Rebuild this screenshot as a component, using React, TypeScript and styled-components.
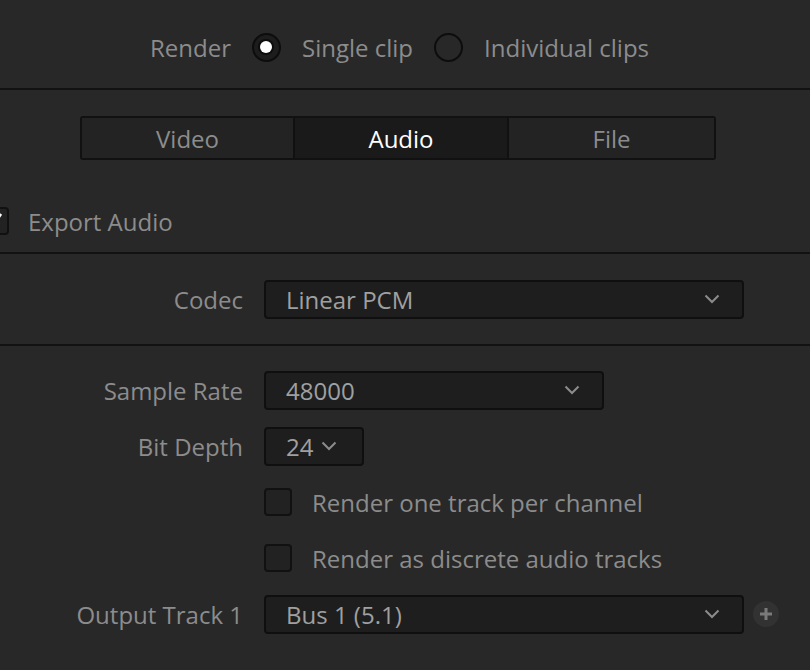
import * as React from 'react';
import styled, { createGlobalStyle } from 'styled-components';

const Global = createGlobalStyle`
  html, body {
    margin: 0;
    padding: 0;
    background: #282828;
  }
  body {
    font-family: 'Open Sans', 'Noto Sans', 'Liberation Sans', sans-serif;
    font-size: 24px;
    color: #8c8c8c;
    overflow: hidden;
  }
`;

const Panel = styled.div`
  width: 810px;
  height: 670px;
  background: #282828;
  overflow: hidden;
`;

const Section = styled.div`
  border-bottom: 2px solid #121212;
`;

const RenderRow = styled(Section)`
  display: flex;
  align-items: center;
  padding: 6px 0 0 150px;
  box-sizing: border-box;
  height: 90px;
  gap: 21px;
`;

const Label = styled.span`
  color: #8c8c8c;
  white-space: nowrap;
`;

const Radio = styled.span<{ $on?: boolean }>`
  width: 29px;
  height: 29px;
  flex: none;
  border-radius: 50%;
  box-sizing: border-box;
  border: 2px solid #0d0d0d;
  background: ${(p) => (p.$on ? '#1d1d1d' : 'transparent')};
  display: flex;
  align-items: center;
  justify-content: center;
  &::after {
    content: '';
    display: ${(p) => (p.$on ? 'block' : 'none')};
    width: 12px;
    height: 12px;
    border-radius: 50%;
    background: #fff;
    box-shadow: 0 0 0 2px #0d0d0d;
  }
`;

const TabsSection = styled(Section)`
  height: 164px;
  padding-top: 26px;
  box-sizing: border-box;
  display: flex;
  flex-direction: column;
`;

const Tabs = styled.div`
  margin-left: 80px;
  width: 636px;
  height: 44px;
  display: grid;
  grid-template-columns: 211px 214px 1fr;
  border: 2px solid #111;
  border-radius: 3px;
  box-sizing: border-box;
  overflow: hidden;
`;

const Tab = styled.div<{ $active?: boolean }>`
  display: flex;
  align-items: center;
  justify-content: center;
  background: ${(p) => (p.$active ? '#1a1a1a' : '#232323')};
  color: ${(p) => (p.$active ? '#ffffff' : '#8c8c8c')};
  & + & {
    border-left: 2px solid #111;
  }
`;

const ExportRow = styled.div`
  margin-top: 45px;
  height: 32px;
  display: flex;
  align-items: center;
  gap: 19px;
  margin-left: -19px;
`;

const Box = styled.span`
  width: 28px;
  height: 28px;
  flex: none;
  box-sizing: border-box;
  border: 2px solid #111;
  border-radius: 4px;
  background: #222;
  display: flex;
  align-items: center;
  justify-content: center;
`;

const CodecSection = styled(Section)`
  height: 90px;
  display: flex;
  flex-direction: column;
  justify-content: center;
`;

const FormGrid = styled.div`
  display: grid;
  grid-template-columns: 243px auto;
  column-gap: 21px;
  padding-top: 16px;
`;

const Row = styled.div`
  display: contents;
`;

const Cell = styled.div<{ $right?: boolean }>`
  height: 56px;
  display: flex;
  align-items: center;
  justify-content: ${(p) => (p.$right ? 'flex-end' : 'flex-start')};
  gap: 20px;
`;

const Select = styled.div<{ $w: number; $compact?: boolean }>`
  width: ${(p) => p.$w}px;
  height: 39px;
  box-sizing: border-box;
  border: 2px solid #0f0f0f;
  border-radius: 4px;
  background: #1e1e1e;
  color: #a0a0a0;
  display: flex;
  align-items: center;
  justify-content: ${(p) => (p.$compact ? 'flex-start' : 'space-between')};
  gap: 8px;
  padding: 0 ${(p) => (p.$compact ? '0' : '22px')} 0 20px;
  white-space: nowrap;
`;

const CodecLine = styled.div`
  display: grid;
  grid-template-columns: 243px auto;
  column-gap: 21px;
  align-items: center;
`;

const PlusBtn = styled.span`
  width: 26px;
  height: 26px;
  border-radius: 50%;
  background: #323232;
  display: flex;
  align-items: center;
  justify-content: center;
  margin-left: -11px;
`;

const Chevron = () => (
  <svg width="16" height="10" viewBox="0 0 16 10">
    <path d="M1.5 1.5 L8 8 L14.5 1.5" fill="none" stroke="#8c8c8c" strokeWidth="2" />
  </svg>
);

const Check = () => (
  <svg width="20" height="20" viewBox="0 0 20 20">
    <path d="M4 10 L8 15 L16 3" fill="none" stroke="#fff" strokeWidth="2.6" />
  </svg>
);

const Plus = () => (
  <svg width="14" height="14" viewBox="0 0 14 14">
    <path d="M7 1 V13 M1 7 H13" stroke="#7a7a7a" strokeWidth="3" />
  </svg>
);

export default function App() {
  return (
    <Panel>
      <Global />
      <RenderRow>
        <Label>Render</Label>
        <Radio $on />
        <Label>Single clip</Label>
        <Radio />
        <Label>Individual clips</Label>
      </RenderRow>

      <TabsSection>
        <Tabs>
          <Tab>Video</Tab>
          <Tab $active>Audio</Tab>
          <Tab>File</Tab>
        </Tabs>
        <ExportRow>
          <Box>
            <Check />
          </Box>
          <Label>Export Audio</Label>
        </ExportRow>
      </TabsSection>

      <CodecSection>
        <CodecLine>
          <Cell $right>
            <Label>Codec</Label>
          </Cell>
          <Cell>
            <Select $w={480}>
              <span>Linear PCM</span>
              <Chevron />
            </Select>
          </Cell>
        </CodecLine>
      </CodecSection>

      <FormGrid>
        <Row>
          <Cell $right>
            <Label>Sample Rate</Label>
          </Cell>
          <Cell>
            <Select $w={340}>
              <span>48000</span>
              <Chevron />
            </Select>
          </Cell>
        </Row>
        <Row>
          <Cell $right>
            <Label>Bit Depth</Label>
          </Cell>
          <Cell>
            <Select $w={100} $compact>
              <span>24</span>
              <Chevron />
            </Select>
          </Cell>
        </Row>
        <Row>
          <Cell />
          <Cell>
            <Box />
            <Label>Render one track per channel</Label>
          </Cell>
        </Row>
        <Row>
          <Cell />
          <Cell>
            <Box />
            <Label>Render as discrete audio tracks</Label>
          </Cell>
        </Row>
        <Row>
          <Cell $right>
            <Label>Output Track 1</Label>
          </Cell>
          <Cell>
            <Select $w={480}>
              <span>Bus 1 (5.1)</span>
              <Chevron />
            </Select>
            <PlusBtn>
              <Plus />
            </PlusBtn>
          </Cell>
        </Row>
      </FormGrid>
    </Panel>
  );
}
